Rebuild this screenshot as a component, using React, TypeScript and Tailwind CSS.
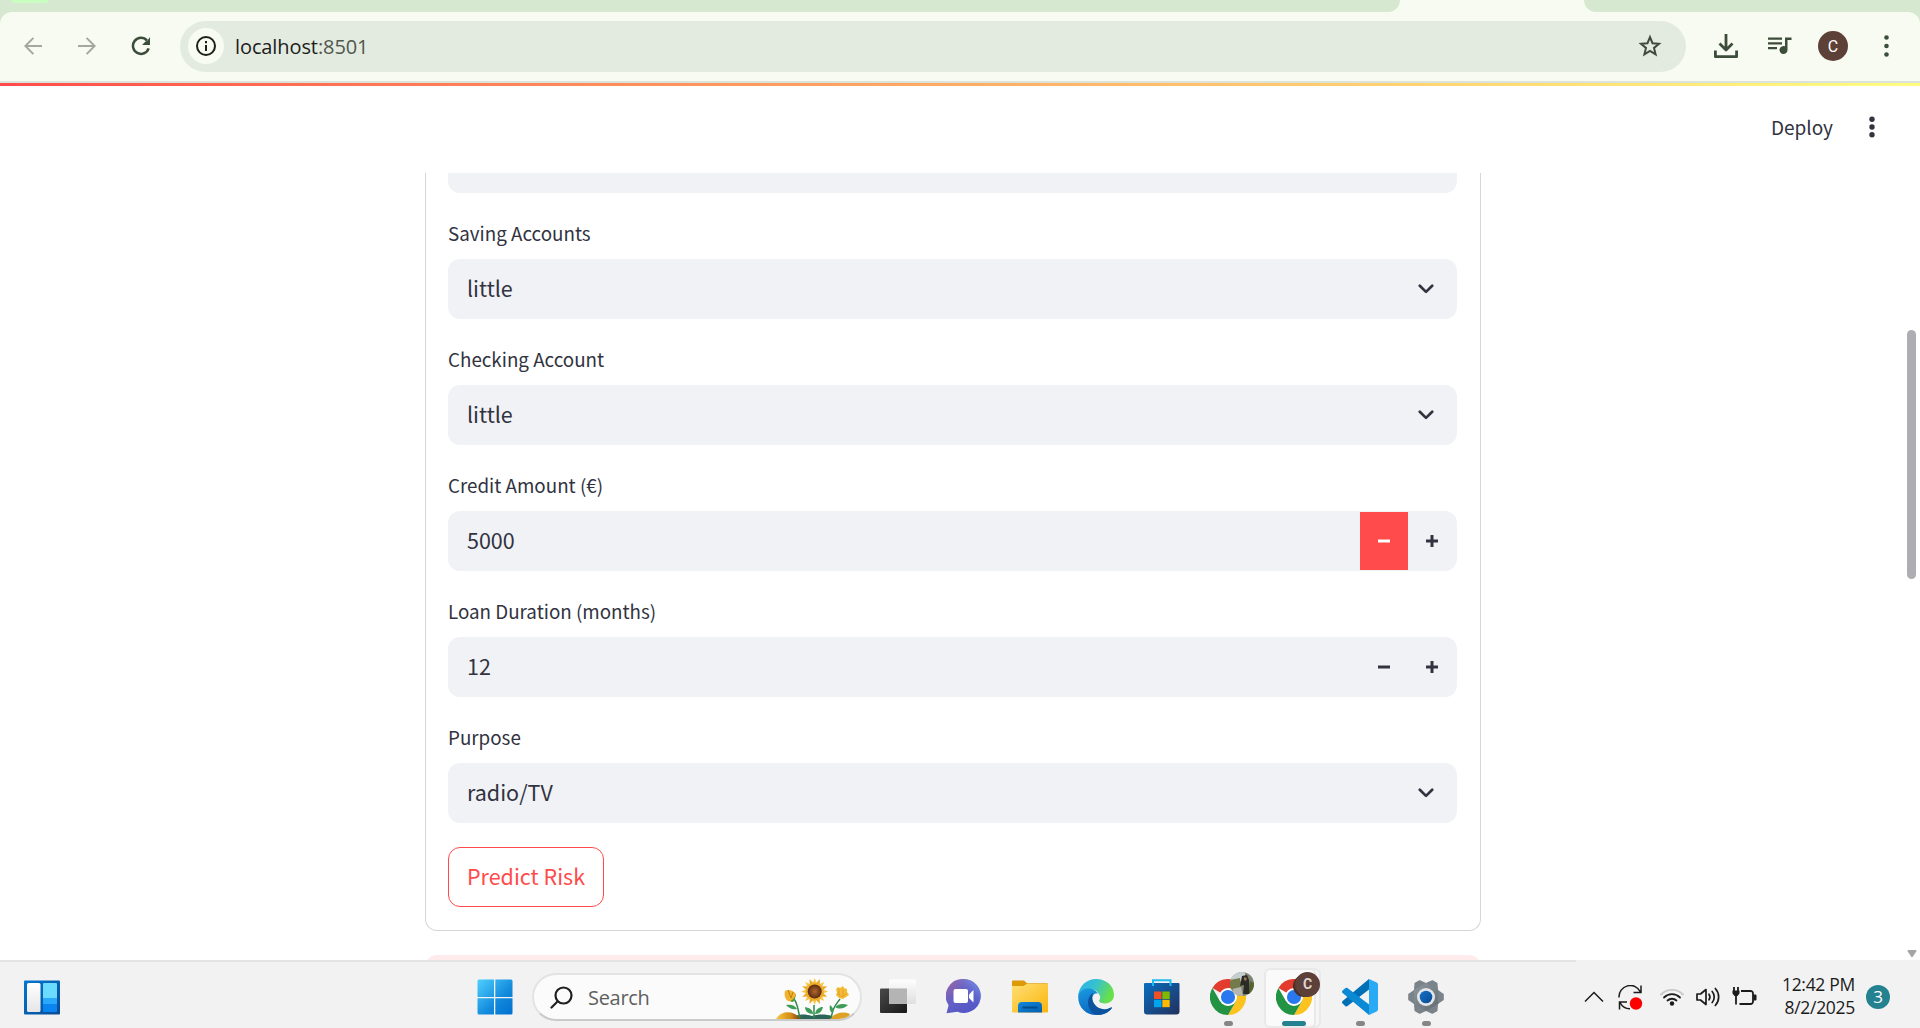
import React from 'react';

const SOURCE = "font-['Noto_Sans_CJK_SC',sans-serif]";

function TabStrip() {
  return (
    <div className="flex h-3 w-full shrink-0 bg-[#f8fbf2]">
      <div className="h-3 w-[1400px] rounded-br-[14px] bg-[#d6e8d0]">
        <div className="ml-[12px] h-[3px] w-[36px] rounded-b-[12px] bg-[#c8ffc0]" />
      </div>
      <div className="w-[184px]" />
      <div className="h-3 flex-1 rounded-bl-[14px] bg-[#d6e8d0]" />
    </div>
  );
}

function Toolbar() {
  return (
    <div className="h-[69px] w-full shrink-0 bg-[#d6e8d0]">
      <div className="flex h-full items-center rounded-t-[12px] bg-[#f8fbf2] pt-px pb-[2px]">
        <svg className="ml-[24px]" width="18" height="18" viewBox="0 0 18 18" fill="none" stroke="#a3a8a0" strokeWidth="2">
          <path d="M18 9H1.8M9.4 .9 1.4 9l8 8.1" />
        </svg>
        <svg className="ml-[36px]" width="18" height="18" viewBox="0 0 18 18" fill="none" stroke="#a3a8a0" strokeWidth="2">
          <path d="M0 9h16.2M8.6 .9l8 8.1-8 8.1" />
        </svg>
        <svg className="ml-[35px]" width="20" height="20" viewBox="0 0 20 20" fill="none" stroke="#3c4d3a" strokeWidth="2.5">
          <path d="M17.6 12.3A8 8 0 1 1 16 4.6" />
          <path d="M19 1v8h-8l3-3 2.5-1.5z" fill="#3c4d3a" stroke="none" />
        </svg>
        <div className="ml-[29px] flex h-[51px] w-[1506px] items-center rounded-full bg-[#e3ebe0]">
          <div className="ml-[8px] flex size-[36px] items-center justify-center rounded-full bg-[#f8fbf2]">
            <svg width="20" height="20" viewBox="0 0 20 20" fill="none" stroke="#1c201b" strokeWidth="2">
              <circle cx="10" cy="10" r="9" />
              <path d="M10 9v6M10 5v2.2" />
            </svg>
          </div>
          <div className="ml-[11px] flex-1 pt-[2px] font-['Open_Sans',sans-serif] text-[20px] leading-[28px] tracking-[-0.1px] text-[#1c201b]">
            localhost<span className="text-[#50574e]">:8501</span>
          </div>
          <svg className="mr-[24px]" width="24" height="24" viewBox="0 0 24 24" fill="none" stroke="#41493f" strokeWidth="2" strokeLinejoin="miter">
            <path d="M12 3.2l2.5 6 6.5.5-5 4.2 1.6 6.4L12 16.9l-5.6 3.4L8 13.9 3 9.7l6.5-.5z" />
          </svg>
        </div>
        <svg className="ml-[28px]" width="24" height="26" viewBox="0 0 24 26" fill="none" stroke="#3c4d3a" strokeWidth="2.8">
          <path d="M12 1v15M5.5 10.5 12 17l6.5-6.5M1.4 17.5v6.2h21.2v-6.2" strokeLinejoin="round" />
        </svg>
        <svg className="ml-[30px]" width="24" height="20" viewBox="0 0 24 20" fill="#3c4d3a">
          <path d="M0 1.5h14v2.2H0zM0 6.3h14v2.2H0zM0 11.1h9v2.2H0zM17 1.5h6.5v2.5H19.5v10a4 4 0 1 1-2.5-3.7z" />
        </svg>
        <div className="ml-[26px] flex size-[30px] items-center justify-center rounded-full bg-[#5d4037] pt-px font-['Roboto',sans-serif] text-[16px] text-white">C</div>
        <svg className="ml-[36px]" width="5" height="24" viewBox="0 0 5 24" fill="#3c4d3a">
          <circle cx="2.5" cy="3.5" r="2.3" /><circle cx="2.5" cy="12" r="2.3" /><circle cx="2.5" cy="20.5" r="2.3" />
        </svg>
      </div>
    </div>
  );
}

function Chevron() {
  return (
    <svg className="mr-[23px]" width="16" height="10" viewBox="0 0 16 10" fill="none" stroke="#31333f" strokeWidth="2.7" strokeLinecap="round" strokeLinejoin="round">
      <path d="M1.8 1.8 8 7.9l6.2-6.1" />
    </svg>
  );
}

function Stepper({ active }: { active?: boolean }) {
  return (
    <div className="flex h-[58px] w-[97px]">
      <div className={active ? 'flex w-[48px] items-center justify-center bg-[#ff4b4b] text-white' : 'flex w-[48px] items-center justify-center text-[#31333f]'}>
        <svg width="12" height="12" viewBox="0 0 12 12" fill="currentColor"><path d="M0 4.5h12v3H0z" /></svg>
      </div>
      <div className="flex w-[48px] items-center justify-center text-[#31333f]">
        <svg width="12" height="12" viewBox="0 0 12 12" fill="currentColor"><path d="M0 4.5h4.5V0h3v4.5H12v3H7.5V12h-3V7.5H0z" /></svg>
      </div>
    </div>
  );
}

function Field({ label, value, children }: { label: string; value: string; children: React.ReactNode }) {
  return (
    <div className="pt-[24px]">
      <div className="h-[42px] text-[18.8px] leading-[32px] text-[#31333f]">{label}</div>
      <div className="flex h-[60px] items-center justify-between rounded-[12px] bg-[#f0f2f6]">
        <div className="pb-[2px] pl-[19px] text-[21.5px] leading-[32px] text-[#31333f]">{value}</div>
        {children}
      </div>
    </div>
  );
}

function Page() {
  return (
    <div className={`flex h-[874px] w-full shrink-0 bg-white ${SOURCE}`}>
      <div className="flex flex-1 flex-col">
        <div className="flex h-[87px] shrink-0 items-center justify-end pb-[5px]">
          <span className="pb-px text-[19px] leading-[30px] text-[#31333f]">Deploy</span>
          <svg className="mr-[30px] ml-[36px]" width="6" height="22" viewBox="0 0 6 22" fill="#31333f">
            <circle cx="3" cy="3.3" r="2.7" /><circle cx="3" cy="11" r="2.7" /><circle cx="3" cy="18.7" r="2.7" />
          </svg>
        </div>
        <div className="h-[787px] overflow-hidden pl-[425px]">
          <div className="h-[758px] w-[1056px] rounded-b-[12px] border border-t-0 border-[#d5d6d8] pr-[23px] pl-[22px]">
            <div className="h-[20px] w-full rounded-b-[12px] bg-[#f0f2f6]" />
            <Field label="Saving Accounts" value="little"><Chevron /></Field>
            <Field label="Checking Account" value="little"><Chevron /></Field>
            <Field label="Credit Amount (€)" value="5000"><Stepper active /></Field>
            <Field label="Loan Duration (months)" value="12"><Stepper /></Field>
            <Field label="Purpose" value="radio/TV"><Chevron /></Field>
            <button className="mt-[24px] flex h-[60px] w-[156px] items-center justify-center rounded-[12px] border border-[#ff4b4b] pb-[2px] text-[21.5px] leading-[32px] text-[#ff4b4b]">Predict Risk</button>
          </div>
          <div className="mt-[24px] h-[40px] w-[1056px] rounded-[12px] bg-[#ffebeb]" />
        </div>
      </div>
      <div className="flex w-[15px] flex-col items-center pr-px">
        <div className="mt-[244px] h-[249px] w-[9px] -translate-x-px rounded-full bg-[#aeadb2]" />
        <svg className="mt-[371px]" width="10" height="8" viewBox="0 0 10 8" fill="#a6a6aa"><path d="M1.5 0h7a1 1 0 0 1 .8 1.5L6 6.5a1.2 1.2 0 0 1-2 0L.7 1.5A1 1 0 0 1 1.5 0z" /></svg>
      </div>
    </div>
  );
}

function Widgets() {
  return (
    <svg width="36" height="35" viewBox="0 0 36 35">
      <defs>
        <linearGradient id="wg" x1="0" y1="0" x2="1" y2="1"><stop stopColor="#0078d4" /><stop offset="1" stopColor="#0c4a93" /></linearGradient>
        <linearGradient id="ww" x1="0" y1="0" x2="0" y2="1"><stop stopColor="#fff" /><stop offset="1" stopColor="#e6e6e8" /></linearGradient>
      </defs>
      <rect y=".5" width="36" height="34" rx="1" fill="url(#wg)" />
      <rect x="3" y="3" width="13.5" height="29" rx="1.5" fill="url(#ww)" />
      <path d="M19 4a1 1 0 0 1 1-1h12a1 1 0 0 1 1 1v15H19z" fill="#6bdcff" />
      <path d="M19 18h14v6H19z" fill="#28a9fb" />
      <path d="M19 24h14v7a1 1 0 0 1-1 1H20a1 1 0 0 1-1-1z" fill="#0a84ee" />
    </svg>
  );
}

function StartLogo() {
  return (
    <svg width="36" height="36" viewBox="0 0 36 36">
      <defs><linearGradient id="st" gradientUnits="userSpaceOnUse" x1="0" y1="0" x2="36" y2="36"><stop stopColor="#4fd2ff" /><stop offset=".6" stopColor="#1289dc" /><stop offset="1" stopColor="#0070d0" /></linearGradient></defs>
      <path fill="url(#st)" d="M2 .5h15v17.500H.5V2A1.5 1.5 0 0 1 2 .5zM18.300 .5H34A1.5 1.5 0 0 1 35.5 2v16H18.300zM.5 19.300H17v16.200H2A1.5 1.5 0 0 1 .5 34zM18.300 19.300h17.200V34a1.5 1.5 0 0 1-1.5 1.5H18.300z" />
    </svg>
  );
}

const petals = Array.from({ length: 16 }, (_, i) => i * 22.5);

function Sunflowers() {
  return (
    <svg width="76" height="41" viewBox="0 0 76 41">
      <defs>
        <radialGradient id="sf"><stop stopColor="#b4672d" /><stop offset="1" stopColor="#5a2c12" /></radialGradient>
        <linearGradient id="hill" x1="0" x2="1"><stop stopColor="#f8c63c" /><stop offset=".6" stopColor="#d28a18" /><stop offset="1" stopColor="#6e3c12" /></linearGradient>
      </defs>
      <path d="M20 38c4-2 10-2 16 0 6-2 14-2 20 0v4H20z" fill="#2c6558" />
      <path d="M0 41c5-9 18-9 25 0z" fill="url(#hill)" />
      <path d="M54 41c4-6 13-8 20-5l-3 5z" fill="#dda126" />
      <g fill="none" stroke="#2f8a4c" strokeWidth="1.5">
        <path d="M18 21c4 5 4 12 6 19M38 27v13M64 21c-3 4-5 6-7 11l-2 8" />
      </g>
      <g fill="#3f9c58">
        <path d="M21 31c-5 1-8-1-11-4 5-1 9 0 11 4zM37 36c-6 0-8-4-8-7 5 1 8 3 8 7zM39 36c1-5 4-7 8-7-1 4-3 7-8 7zM59 29c3-3 8-4 13-2-3 3-8 5-13 2zM57 35c-3-1-4-4-3-8 3 2 4 5 3 8z" />
        <path d="M12 21c3 4 6 4 7 0l1-5-8 3z" fill="#579a3c" />
      </g>
      <path d="M9 13c3-2 8-1 11 3-1 4-5 8-8 7-3-2-4-6-3-10z" fill="#f0b32d" />
      <path d="M12 12l3 8 2-6" fill="none" stroke="#c67c13" />
      <path d="M60 11l2-2 2 1 3-2 1 2 3 1v3l2 3-3 2-3 2-4-1-3-3 1-2z" fill="#f3bb36" />
      <path d="M63 11v7M67 11v8M61 15l5 4 5-4" fill="none" stroke="#e0a027" strokeWidth=".8" />
      {petals.map((a) => (
        <path key={a} d="M36 7 38.7 0l2.7 7z" fill={a % 45 ? '#eba927' : '#f7c948'} transform={`rotate(${a} 38.7 13.5)`} />
      ))}
      <circle cx="38.7" cy="13.5" r="9" fill="#eead2a" />
      <circle cx="38.7" cy="13.5" r="7" fill="url(#sf)" />
    </svg>
  );
}

function TaskView() {
  return (
    <svg width="36" height="36" viewBox="0 0 36 36">
      <defs><linearGradient id="tv" x1="0" y1="0" x2="1" y2="1"><stop stopColor="#4a4a4a" /><stop offset="1" stopColor="#181818" /></linearGradient>
        <linearGradient id="tw" x1="0" y1="0" x2="0" y2="1"><stop stopColor="#fff" stopOpacity=".95" /><stop offset="1" stopColor="#ddd" stopOpacity=".9" /></linearGradient></defs>
      <rect y="9.5" width="27" height="24.5" rx="1" fill="url(#tv)" />
      <rect x="9" y=".5" width="27" height="24.5" rx="1" fill="url(#tw)" />
      <path d="M9 9.5h18V24a1 1 0 0 1-1 1H10a1 1 0 0 1-1-1z" fill="#b4b4b4" />
    </svg>
  );
}

function Chat() {
  return (
    <svg width="36" height="36" viewBox="0 0 36 36">
      <defs><linearGradient id="ch" x1="0" y1="0" x2=".8" y2="1"><stop stopColor="#a5679f" /><stop offset=".45" stopColor="#6560c4" /><stop offset="1" stopColor="#5055c8" /></linearGradient>
        <linearGradient id="ch2" x1="0" y1="1" x2="1" y2="0"><stop offset=".5" stopColor="#5a5fca" stopOpacity="0" /><stop offset="1" stopColor="#84a9f4" /></linearGradient></defs>
      <path d="M17.500 0a17 17 0 1 1-6 32.8L.5 34.3l2.100-8A17 17 0 0 1 17.500 0z" fill="url(#ch)" />
      <circle cx="17.5" cy="17" r="17" fill="url(#ch2)" />
      <rect x="7.5" y="10" width="14.5" height="14" rx="2" fill="#fff" />
      <path d="M23 15.500 27.500 11v12.500L23 19z" fill="#fff" />
    </svg>
  );
}

function Folder() {
  return (
    <svg width="36" height="36" viewBox="0 0 36 36">
      <defs><linearGradient id="fo" x1="0" y1="0" x2="1" y2="1"><stop stopColor="#ffdf75" /><stop offset="1" stopColor="#fab50c" /></linearGradient>
        <linearGradient id="fb" x1="0" y1="0" x2="1" y2="1"><stop stopColor="#1287dd" /><stop offset="1" stopColor="#0460b0" /></linearGradient></defs>
      <path d="M0 2.500a1 1 0 0 1 1-1h11l3 2.700h20a1 1 0 0 1 1 1V9H0z" fill="#dc9a06" />
      <path d="M0 7h11.500l3.500-2.300h20a1 1 0 0 1 1 1V32.500a1 1 0 0 1-1 1H1a1 1 0 0 1-1-1z" fill="url(#fo)" />
      <path d="M6 33.500V27a4 4 0 0 1 4-4h16a4 4 0 0 1 4 4v6.500z" fill="url(#fb)" />
      <path d="M10.500 28.500h15" stroke="#064b86" strokeWidth="2" />
    </svg>
  );
}

function Edge() {
  return (
    <svg width="36" height="36" viewBox="0 0 256 256">
      <defs>
        <linearGradient id="e1" x1="0" y1="0" x2="1" y2=".35"><stop stopColor="#2cb1ea" /><stop offset=".5" stopColor="#35c1d0" /><stop offset="1" stopColor="#68e04a" /></linearGradient>
        <linearGradient id="e2" x1="0" y1="0" x2=".4" y2="1"><stop stopColor="#1b9de2" /><stop offset="1" stopColor="#0b66bf" /></linearGradient>
      </defs>
      <path fill="url(#e2)" d="M2 118C8 62 60 46 96 66c30 14 42 36 60 42-18-12-44-8-52 16-12 38 22 92 84 92 22 0 34-8 46-14 4-2 8 2 4 8-26 34-62 46-110 46C56 256-4 198 2 118z" />
      <path fill="#0b529f" d="M106 244c-48-50-46-112 2-146-22 42 4 112 80 118 22 0 34-8 46-14 4-2 8 2 4 8-30 40-88 58-132 34z" />
      <path fill="url(#e1)" d="M2 118C8 48 62 0 128 0c74 0 128 50 128 112 0 36-28 62-62 62-42 0-46-14-42-24 8-12 8-26 0-38-22-38-66-48-100-42-24 6-44 24-50 48z" />
    </svg>
  );
}

function Store() {
  return (
    <svg width="36" height="36" viewBox="0 0 36 36">
      <defs><linearGradient id="so" x1="0" y1="0" x2="1" y2="1"><stop stopColor="#0a6ec0" /><stop offset="1" stopColor="#22305c" /></linearGradient></defs>
      <path d="M0 5a1 1 0 0 1 1-1h33.500a1 1 0 0 1 1 1v27.500a3 3 0 0 1-3 3H3a3 3 0 0 1-3-3z" fill="url(#so)" />
      <path d="M9 7V1.200h17.500V7" fill="none" stroke="#1fbcf4" strokeWidth="2" />
      <path d="M10 12.500h7.500V20H10z" fill="#f25022" /><path d="M18.300 12.500h7.400V20h-7.400z" fill="#7fba00" />
      <path d="M10 20.800h7.500v7.400H10z" fill="#00a4ef" /><path d="M18.300 20.800h7.400v7.400h-7.400z" fill="#ffb900" />
    </svg>
  );
}

function Chrome() {
  return (
    <svg width="36" height="36" viewBox="0 0 48 48">
      <path fill="#e33b2e" d="M24 24 3.200 12A24 24 0 0 1 44.800 12z" />
      <path fill="#fcc31e" d="M24 12h20.800A24 24 0 0 1 24 48l10.400-18z" />
      <path fill="#229342" d="M3.200 12A24 24 0 0 0 24 48l10.400-18L24 24l-10.400 6z" />
      <circle cx="24" cy="24" r="12" fill="#fff" />
      <circle cx="24" cy="24" r="9.400" fill="#2a78ee" />
    </svg>
  );
}

function VSCode() {
  return (
    <svg width="36" height="36" viewBox="0 0 36 36">
      <path d="M27 0v10.500L5.500 27a1.800 1.800 0 0 1-2.300-.1L.6 24.500a1.800 1.800 0 0 1 0-2.500z" fill="#0070b5" />
      <path d="M27 36V25.500L5.500 9.100a1.800 1.800 0 0 0-2.300.1L.6 11.600a1.800 1.800 0 0 0 0 2.500z" fill="#0a8ad4" />
      <path d="M27 0l7.700 3.600A2.200 2.200 0 0 1 36 5.700v24.600a2.200 2.200 0 0 1-1.300 2.100L27 36z" fill="#2aa9f4" />
    </svg>
  );
}

const teeth = [0, 60, 120, 180, 240, 300];

function Gear() {
  return (
    <svg width="36" height="36" viewBox="0 0 36 36">
      <defs><linearGradient id="ge" x1="0" y1="0" x2="1" y2="1"><stop stopColor="#929aa1" /><stop offset="1" stopColor="#616970" /></linearGradient>
        <linearGradient id="gb" x1="0" y1="0" x2="1" y2="1"><stop stopColor="#1672cb" /><stop offset="1" stopColor="#084a91" /></linearGradient></defs>
      <circle cx="18" cy="18" r="14" fill="url(#ge)" />
      {teeth.map((a) => (
        <path key={a} d="M30 11l5 3.500a1 1 0 0 1 .8 1v5a1 1 0 0 1-.8 1L30 25z" fill="#7a838a" transform={`rotate(${a} 18 18)`} />
      ))}
      <circle cx="18" cy="18" r="9" fill="#e4e7ea" />
      <circle cx="18" cy="18" r="6.300" fill="url(#gb)" />
    </svg>
  );
}

function Task({ children, badge, state }: { children: React.ReactNode; badge?: React.ReactNode; state?: 'open' | 'active' }) {
  return (
    <div className="relative flex h-[66px] w-[66px] items-center justify-center">
      {state === 'active' && (
        <>
          <div className="absolute top-[6px] left-[14px] h-[60px] w-[46px] rounded-[6px] border-2 border-[#e9e9e9] bg-[#f6f6f6]" />
          <div className="absolute top-[6px] left-[3px] h-[60px] w-[52px] rounded-[6px] border-2 border-[#e9e9e9] bg-[#fafafa]" />
        </>
      )}
      <div className="relative mt-[4px]">{children}</div>
      {badge}
      {state === 'open' && <div className="absolute top-[59px] left-[29px] h-[5px] w-[9px] rounded-full bg-[#868686]" />}
      {state === 'active' && <div className="absolute top-[59px] left-[21px] h-[5px] w-[24px] rounded-full bg-[#24818f]" />}
    </div>
  );
}

function PhotoBadge() {
  return (
    <svg className="absolute top-[10px] left-[35px]" width="24" height="24" viewBox="0 0 24 24">
      <defs><clipPath id="pb"><circle cx="12" cy="12" r="12" /></clipPath></defs>
      <g clipPath="url(#pb)">
        <path d="M0 0h24v24H0z" fill="#7e8472" /><path d="M0 0h15v9H0z" fill="#c6cfd0" /><path d="M0 8l10-2 1 9-11 2z" fill="#747a49" />
        <path d="M12 4l5-1 2 5 1 14h-7l1-9-4 1z" fill="#2a2b25" /><path d="M14 5l3 1-1 3-2-1z" fill="#9a7656" /><path d="M3 17l8-2 2 9H2z" fill="#b5b7ae" /><path d="M20 9l4 2v9l-5 3z" fill="#55652f" />
      </g>
    </svg>
  );
}

function InitialBadge() {
  return (
    <>
      <div className="absolute top-[13px] left-[32px] size-[22px] rounded-full bg-[#47302a]" />
      <div className="absolute top-[10px] left-[34px] flex size-[25px] items-center justify-center rounded-full bg-[#5d4037] font-['Roboto',sans-serif] text-[14px] font-bold text-[#ddd4d0]">C</div>
    </>
  );
}

function Tray() {
  return (
    <div className="flex h-[66px] items-center pt-[4px]">
      <svg width="20" height="12" viewBox="0 0 20 12" fill="none" stroke="#1b1b1b" strokeWidth="1.500"><path d="M1 10.500 10 1.500l9 9" /></svg>
      <svg className="ml-[14px]" width="25" height="25" viewBox="0 0 25 25" fill="none" stroke="#1b1b1b" strokeWidth="1.500">
        <path d="M1 12.500A11.300 11.300 0 0 1 22.500 7M23 .5v7h-7.500M1.500 24.500v-7.500h7.500M2 17.500a11 11 0 0 0 10 6.200" /><circle cx="18" cy="18.500" r="6.200" fill="#f00" stroke="none" />
      </svg>
      <svg className="ml-[17px]" width="24" height="20" viewBox="0 0 24 20" fill="none" strokeWidth="1.800" strokeLinecap="round">
        <path d="M1 7.500a15.500 15.500 0 0 1 22 0" stroke="#c8c8c8" /><path d="M4 10.500a11.300 11.300 0 0 1 16 0M7.500 13.500a6.600 6.600 0 0 1 9 0" stroke="#1b1b1b" /><circle cx="12" cy="16.500" r="2.200" fill="#1b1b1b" />
      </svg>
      <svg className="ml-[12px]" width="24" height="20" viewBox="0 0 24 20" fill="none" stroke="#1b1b1b" strokeWidth="1.700" strokeLinecap="round" strokeLinejoin="round">
        <path d="M1 7v6h3.500l5.500 4.500v-15L4.500 7zM13 7.200a5 5 0 0 1 0 5.600M16.200 4.500a8.500 8.500 0 0 1 0 11M19.300 1.500a12.500 12.500 0 0 1 0 17" />
      </svg>
      <svg className="ml-[12px]" width="25" height="20" viewBox="0 0 25 20" fill="none" stroke="#1b1b1b" strokeWidth="1.800">
        <path d="M9 4h9.500a2.500 2.500 0 0 1 2.500 2.500v8a2.500 2.500 0 0 1-2.500 2.500H7.500M4 8v9.500" /><path d="M2 0v4M6 0v4" /><path d="M.5 3.500h7v3L5.500 9h-3L.5 6.500zM21.500 7.500h2a1 1 0 0 1 1 1v4a1 1 0 0 1-1 1h-2z" fill="#1b1b1b" stroke="none" />
      </svg>
      <div className="ml-[21px] w-[77px] pb-[2px] text-right font-['Open_Sans',sans-serif] text-[17.500px] leading-[23px] tracking-[-0.3px] whitespace-nowrap text-[#1b1b1b]">
        <div>12:42 PM</div>
        <div>8/2/2025</div>
      </div>
      <div className="mr-[30px] ml-[11px] flex size-[24px] items-center justify-center rounded-full bg-[#24818f] pb-px font-['Open_Sans',sans-serif] text-[17px] text-white">3</div>
    </div>
  );
}

function Taskbar() {
  return (
    <div className="flex h-[68px] w-full shrink-0 flex-col bg-[#f2f2f2]">
      <div className="h-[2px] w-[1576px] bg-[#e4e4e4]" />
      <div className="flex h-[66px] items-center">
        <div className="ml-[24px] pt-[4px]"><Widgets /></div>
        <div className="ml-[417px] pt-[4px]"><StartLogo /></div>
        <div className="mt-[4px] ml-[19px] flex h-[48px] w-[330px] items-center overflow-hidden rounded-full border-2 border-[#e3e3e3] border-b-[#cacaca] bg-[#fbfbfb]">
          <svg className="ml-[16px]" width="23" height="23" viewBox="0 0 23 23" fill="none" stroke="#1f1f1f" strokeWidth="2.200" strokeLinecap="round"><circle cx="13.500" cy="9.500" r="8" /><path d="M7.500 15.500 1.500 21.500" /></svg>
          <span className="ml-[15px] flex-1 pt-px font-['Open_Sans',sans-serif] text-[20px] leading-[28px] tracking-[-0.3px] text-[#5f5f5f]">Search</span>
          <div className="mt-[2px] mr-[8px]"><Sunflowers /></div>
        </div>
        <div className="ml-[3px] flex">
          <Task><TaskView /></Task>
          <Task><Chat /></Task>
          <Task><Folder /></Task>
          <Task><Edge /></Task>
          <Task><Store /></Task>
          <Task state="open" badge={<PhotoBadge />}><Chrome /></Task>
          <Task state="active" badge={<InitialBadge />}><Chrome /></Task>
          <Task state="open"><VSCode /></Task>
          <Task state="open"><Gear /></Task>
        </div>
        <div className="ml-auto"><Tray /></div>
      </div>
    </div>
  );
}

export default function App() {
  return (
    <div className="flex h-[1028px] w-[1920px] flex-col overflow-hidden bg-white">
      <TabStrip />
      <Toolbar />
      <div className="h-[2px] shrink-0 bg-[#dbe3da]" />
      <div className="h-[3px] shrink-0 bg-gradient-to-r from-[#ff4b4b] to-[#fffd80]" />
      <Page />
      <Taskbar />
    </div>
  );
}
